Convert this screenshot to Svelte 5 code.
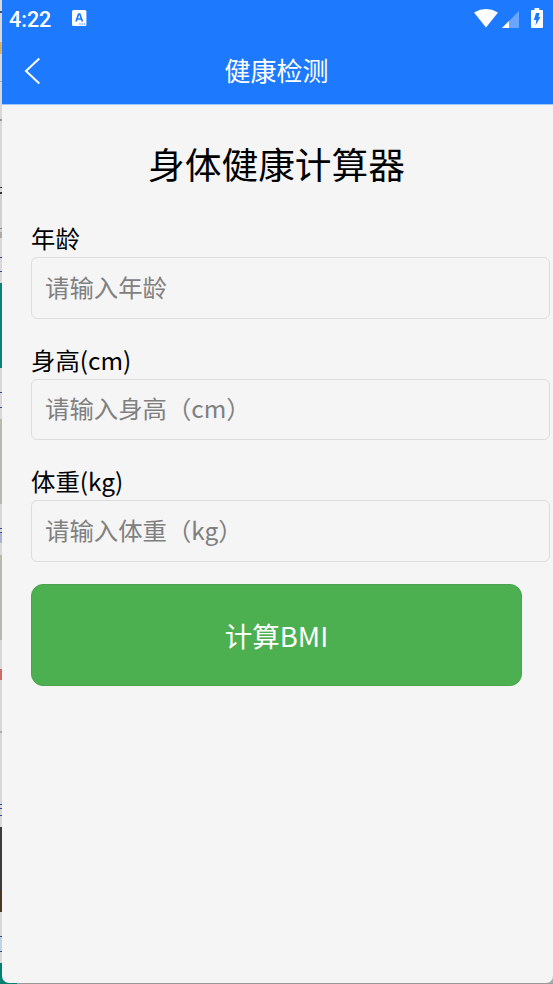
<script lang="ts">
  const fields = [
    { id: 'age', label: '年龄', placeholder: '请输入年龄' },
    { id: 'height', label: '身高(cm)', placeholder: '请输入身高（cm）' },
    { id: 'weight', label: '体重(kg)', placeholder: '请输入体重（kg）' },
  ];

  let values = $state({ age: '', height: '', weight: '' });
</script>

<div class="desktop">
  <div class="phone">
    <header>
      <div class="status">
        <span class="time">4:22</span>
        <svg class="ime" width="15" height="16" viewBox="0 0 15 16">
          <rect width="14.4" height="16" rx="1.6" fill="#fff" />
          <path d="M4 11.5 6.6 4h1.2l2.6 7.5M5 9h4.4" fill="none" stroke="#1d7aff" stroke-width="1.7" />
          <path d="M7.4 14h1.2M9.6 14h1.2M11.8 14H13" stroke="#1d7aff" stroke-width="1.2" />
        </svg>
        <svg class="wifi" width="24" height="19" viewBox="0 0 24 19">
          <path d="M0 3.5Q12-3.3 24 3.5L12 18.5Z" fill="#fff" />
        </svg>
        <svg class="signal" width="17" height="17" viewBox="0 0 17 17">
          <path d="M17 0v17H0Z" fill="#68a6ff" />
          <path d="M7 10v7H0Z" fill="#fff" />
        </svg>
        <svg class="battery" width="12" height="20" viewBox="0 0 12 20">
          <path d="M3.5 0h4.8v2H11q1 0 1 1v16q0 1-1 1H1q-1 0-1-1V3q0-1 1-1h2.5Z" fill="#fff" />
          <path d="M5 5h3.500L7.600 9H9.500L4.500 17.500 5.300 12H2.800Z" fill="#1d7aff" />
        </svg>
      </div>
      <div class="nav">
        <button class="back" aria-label="返回">
          <svg width="17" height="28" viewBox="0 0 17 28">
            <path d="M15.3 1.5 2 14l13.3 12.5" fill="none" stroke="#fff" stroke-width="2" />
          </svg>
        </button>
        <span>健康检测</span>
      </div>
    </header>

    <main>
      <h1>身体健康计算器</h1>
      {#each fields as field (field.id)}
        <div class="field">
          <label for={field.id}>{field.label}</label>
          <input id={field.id} placeholder={field.placeholder} bind:value={values[field.id]} />
        </div>
      {/each}
      <button class="submit">计算BMI</button>
    </main>
  </div>
</div>

<style>
  :global(body) {
    margin: 0;
    overflow: hidden;
  }
  .desktop {
    box-sizing: border-box;
    width: 553px;
    height: 984px;
    padding: 0 0 1px 2px;
    font-family: "Noto Sans CJK SC", sans-serif;
    /* sliver of the windows behind the emulator */
    background:
      linear-gradient(90deg, #00806f 0 17px, #999 17px) 0 983px / 553px 1px no-repeat,
      linear-gradient(
        #d8d8d8 0 11px, #3d5265 11px 13px, #d8d8d8 13px 42px,
        #d9b464 42px 54px, #d8d8d8 54px 81px, #aaa 81px 82px,
        #d8d8d8 82px 119px, #999 119px 121px, #d8d8d8 121px 187px,
        #333 187px 188px, #d8d8d8 188px 192px, #333 192px 194px,
        #d0d0d0 194px 228px, #888 228px 229px, #d0d0d0 229px 232px,
        #b1aaa6 232px 238px, #d8d8d8 238px 257px, #344b99 257px 258px,
        #d8d8d8 258px 271px, #344b99 271px 272px, #d8d8d8 272px 283px,
        #0b8276 283px 368px, #d8d8d8 368px 392px, #344b99 392px 393px,
        #d8d8d8 393px 407px, #344b99 407px 408px, #d8d8d8 408px 419px,
        #b8b8ae 419px 504px, #d8d8d8 504px 528px, #344b99 528px 529px,
        #d8d8d8 529px 532px, #344b99 532px 533px, #aeb4d0 533px 543px,
        #d8d8d8 543px 555px, #b8b8ae 555px 640px, #d8d8d8 640px 669px,
        #d06969 669px 680px, #d8d8d8 680px 731px, #aaa 731px 733px,
        #d8d8d8 733px 804px, #344b99 804px 805px, #d8d8d8 805px 808px,
        #344b99 808px 809px, #d8d8d8 809px 815px, #344b99 815px 816px,
        #d8d8d8 816px 827px, #3c3c3c 827px 890px, #493824 890px 912px,
        #d8d8d8 912px 936px, #344b99 936px 937px, #bfd5df 937px 951px,
        #344b99 951px 952px, #d8d8d8 952px 963px, #00806f 963px
      ) 0 0 / 10px 984px no-repeat,
      #aaa;
  }
  .phone {
    height: 983px;
    overflow: hidden;
    background: #f5f5f5;
    border-radius: 0 0 7px 7px;
  }
  header {
    height: 104px;
    background: #1d7aff;
    border-bottom: 1px solid #a1c7fb;
    color: #fff;
  }
  .status {
    display: flex;
    height: 36px;
    align-items: center;
    padding: 0 10px 0 7px;
  }
  .time {
    width: 63px;
    padding-top: 2px;
    font: 500 21.5px Roboto, sans-serif;
  }
  .wifi {
    margin-left: auto;
  }
  .signal {
    margin: 2px 12px 0 4px;
  }
  .battery {
    margin-top: -1px;
  }
  .nav {
    display: grid;
    grid-template-columns: 59px 1fr 61px;
    height: 68px;
    align-items: center;
    text-align: center;
    font-size: 26px;
    line-height: 38px;
  }
  .back {
    display: flex;
    padding: 0 0 0 22px;
    margin-top: 1px;
    border: 0;
    background: none;
  }
  main {
    padding: 0 31px 0 29px;
  }
  h1 {
    margin: 31px 0 30px;
    font-size: 36.7px;
    line-height: 54px;
    font-weight: 400;
    text-align: center;
    color: #000;
  }
  .field {
    height: 121.5px;
    font-size: 24.4px;
  }
  .field:last-of-type {
    height: 121px;
  }
  label {
    display: block;
    height: 37px;
    line-height: 35px;
    color: #000;
  }
  input {
    display: block;
    box-sizing: border-box;
    width: 519px;
    height: 61.5px;
    padding: 0 13px 3px;
    border: 1.5px solid #ddd;
    border-radius: 6px;
    background: transparent;
    font: inherit;
    font-size: 24.4px;
    outline: none;
  }
  input::placeholder {
    color: #808080;
    opacity: 1;
  }
  .submit {
    display: block;
    width: 491px;
    height: 102px;
    padding: 0;
    border: 1px solid #48a44d;
    border-radius: 12px;
    background: #4caf50;
    color: #fff;
    font: 27.5px "Noto Sans CJK SC", sans-serif;
  }
</style>
